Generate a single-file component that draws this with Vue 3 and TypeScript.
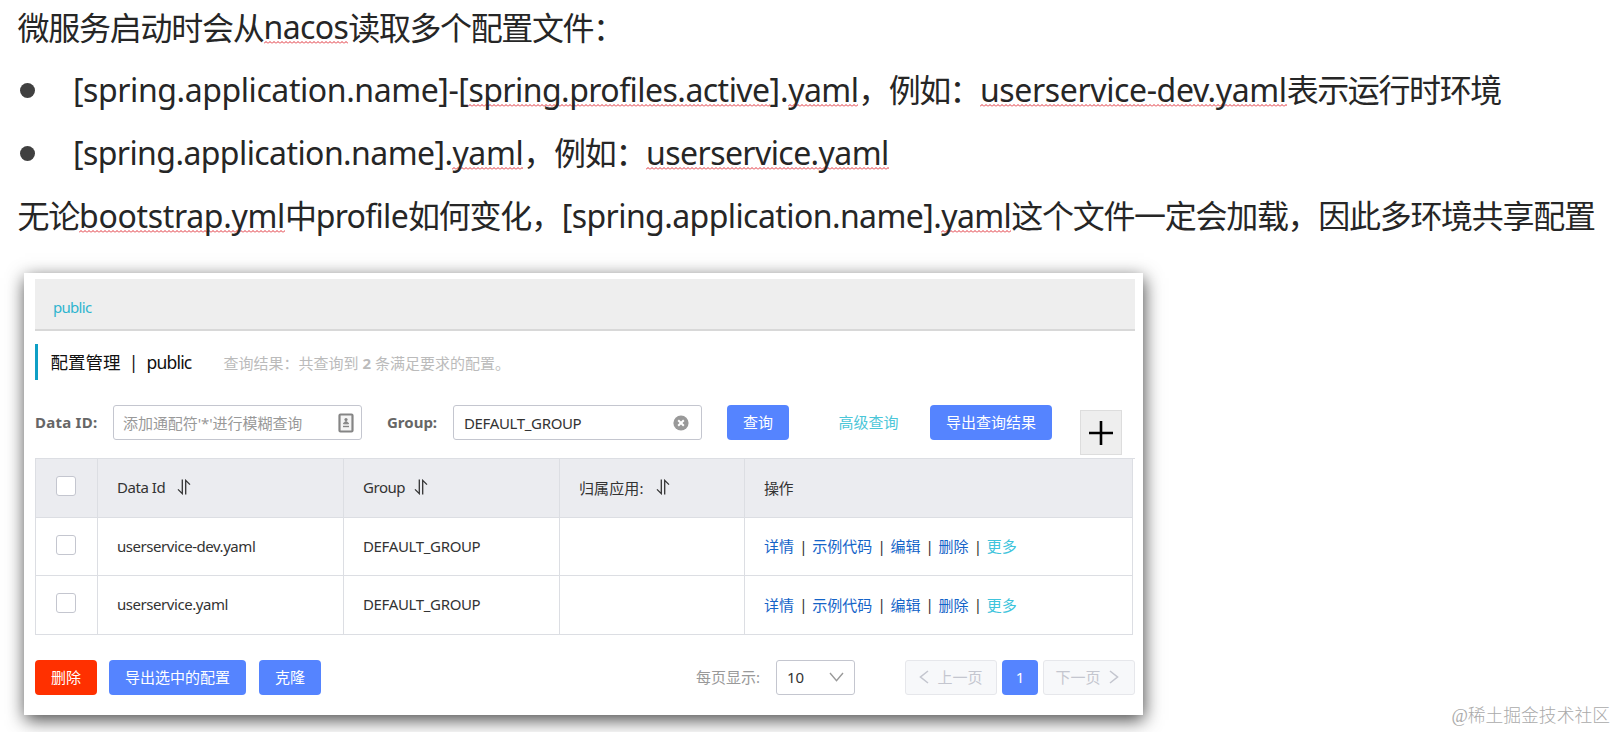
<script setup lang="ts">
interface Segment {
  text: string
  kind: 'cjk' | 'latin'
  track: number
  marked: boolean
}
interface Line {
  bullet: boolean
  segments: Segment[]
}

const cjk = (text: string, track = -1.25): Segment => ({ text, kind: 'cjk', track, marked: false })
const latin = (text: string, track: number): Segment => ({ text, kind: 'latin', track, marked: false })
const marked = (text: string, track: number): Segment => ({ text, kind: 'latin', track, marked: true })

const lines: Line[] = [
  { bullet: false, segments: [cjk('微服务启动时会从'), marked('nacos', -0.6), cjk('读取多个配置文件：', -1.4)] },
  {
    bullet: true,
    segments: [
      latin('[spring.application.name]-[', -0.42),
      marked('spring.profiles.active', -0.54),
      latin('].', -0.2),
      marked('yaml', -0.6),
      cjk('，例如：', -1.6),
      marked('userservice-dev.yaml', -0.38),
      cjk('表示运行时环境', -1.4),
    ],
  },
  {
    bullet: true,
    segments: [
      latin('[spring.application.name].', -0.58),
      marked('yaml', -0.4),
      cjk('，例如：', -1.3),
      marked('userservice.yaml', -0.58),
    ],
  },
  {
    bullet: false,
    segments: [
      cjk('无论'),
      marked('bootstrap.yml', -0.32),
      cjk('中'),
      latin('profile', -0.7),
      cjk('如何变化，'),
      latin('[spring.application.name].', -0.58),
      marked('yaml', -0.6),
      cjk('这个文件一定会加载，因此多环境共享配置', -1.3),
    ],
  },
]

const headers = [
  { label: 'Data Id', sortable: true },
  { label: 'Group', sortable: true },
  { label: '归属应用:', sortable: true },
  { label: '操作', sortable: false },
]
const rows = [
  { id: 'userservice-dev.yaml', group: 'DEFAULT_GROUP' },
  { id: 'userservice.yaml', group: 'DEFAULT_GROUP' },
]
const actions = ['详情', '示例代码', '编辑', '删除']
</script>

<template>
  <main class="page">
    <section class="notes">
      <p v-for="(line, i) in lines" :key="i" class="line">
        <span v-if="line.bullet" class="bullet"><i class="dot"></i></span>
        <span
          v-for="(s, j) in line.segments"
          :key="j"
          :class="[s.kind, { marked: s.marked }]"
          :style="{ letterSpacing: s.track + 'px' }"
        >{{ s.text }}</span>
      </p>
    </section>

    <section class="panel">
      <div class="namespace">public</div>
      <div class="title">
        <span class="title-name">配置管理</span>
        <span class="title-sep">|</span>
        <span class="title-space">public</span>
        <span class="result">查询结果：共查询到 <b>2</b> 条满足要求的配置。</span>
      </div>

      <div class="search">
        <label class="label label-id">Data ID:</label>
        <div class="input placeholder">
          <span>添加通配符'*'进行模糊查询</span>
          <svg width="16" height="20" viewBox="0 0 16 20">
            <rect x="1.5" y="1.5" width="13" height="17" rx="1" fill="#f4f4f4" stroke="#858585" stroke-width="2.2" />
            <circle cx="8" cy="6.500" r="1.6" fill="#858585" />
            <path d="M8 7v3.500M5.500 10.800c0-2.500 5-2.500 5 0z" fill="#858585" stroke="#858585" stroke-width="1" />
            <path d="M5 13.500h6" stroke="#858585" stroke-width="1.4" />
          </svg>
        </div>
        <label class="label label-group">Group:</label>
        <div class="input">
          <span>DEFAULT_GROUP</span>
          <svg width="16" height="16" viewBox="0 0 16 16">
            <circle cx="8" cy="8" r="7.600" fill="#999" />
            <path d="M5.200 5.200l5.600 5.600M10.800 5.200l-5.600 5.600" stroke="#fff" stroke-width="2" />
          </svg>
        </div>
        <button class="btn query">查询</button>
        <a class="advanced">高级查询</a>
        <button class="btn export">导出查询结果</button>
        <div class="plus">
          <svg width="26" height="26" viewBox="0 0 26 26"><path d="M13 1v24M1 13h24" stroke="#000" stroke-width="2.6" /></svg>
        </div>
      </div>

      <div class="table">
        <div class="row head">
          <div class="cell check"><i class="box"></i></div>
          <div v-for="h in headers" :key="h.label" class="cell">
            {{ h.label }}
            <svg v-if="h.sortable" class="sort" width="14" height="16" viewBox="0 0 14 16">
              <path d="M5.300 .5V14.600L1 10.400M8.700 15.500V1.400L13 5.600" fill="none" stroke="#333" stroke-width="1.3" />
            </svg>
          </div>
        </div>
        <div v-for="r in rows" :key="r.id" class="row">
          <div class="cell check"><i class="box"></i></div>
          <div class="cell">{{ r.id }}</div>
          <div class="cell group">{{ r.group }}</div>
          <div class="cell"></div>
          <div class="cell">
            <template v-for="a in actions" :key="a">
              <a class="action">{{ a }}</a><span class="sep">|</span>
            </template>
            <a class="more">更多</a>
          </div>
        </div>
      </div>

      <div class="footer">
        <button class="btn danger">删除</button>
        <button class="btn export-selected">导出选中的配置</button>
        <button class="btn clone">克隆</button>
        <span class="page-label">每页显示:</span>
        <div class="select">
          <span>10</span>
          <svg width="15" height="10" viewBox="0 0 15 10"><path d="M1 1l6.500 7.600L14 1" fill="none" stroke="#999" stroke-width="1.4" /></svg>
        </div>
        <div class="pager prev">
          <svg width="10" height="14" viewBox="0 0 10 14"><path d="M9 1L1.500 7L9 13" fill="none" stroke="#c4c6cf" stroke-width="1.6" /></svg>
          <span>上一页</span>
        </div>
        <div class="current">1</div>
        <div class="pager next">
          <span>下一页</span>
          <svg width="10" height="14" viewBox="0 0 10 14"><path d="M1 1L8.500 7L1 13" fill="none" stroke="#c4c6cf" stroke-width="1.6" /></svg>
        </div>
      </div>
    </section>

    <div class="watermark">@稀土掘金技术社区</div>
  </main>
</template>

<style>
body {
  margin: 0;
  background: #fff;
  overflow: hidden;
}
</style>

<style scoped>
.page {
  position: relative;
  box-sizing: border-box;
  width: 1617px;
  height: 732px;
  overflow: hidden;
  background: #fff;
  font-family: 'Noto Sans', 'Noto Sans CJK SC', sans-serif;
  font-size: 15px;
  color: #333;
}
.notes {
  height: 273px;
  padding-left: 17.500px;
  box-sizing: border-box;
  color: #262626;
}
.line {
  display: flex;
  align-items: center;
  height: 63px;
  margin: 0;
  line-height: 44px;
  white-space: pre;
}
.line:first-child {
  height: 54px;
  margin-bottom: 4px;
}
.bullet {
  width: 55.500px;
  flex: none;
}
.dot {
  display: block;
  width: 15px;
  height: 15px;
  margin: 2px 0 0 2.500px;
  border-radius: 50%;
  background: #404040;
}
.cjk {
  padding-bottom: 3px;
  font-family: 'Noto Sans CJK SC', sans-serif;
  font-size: 32px;
}
.latin {
  font-size: 32px;
}
.marked {
  background: url("data:image/svg+xml,%3Csvg xmlns='http://www.w3.org/2000/svg' width='4' height='3'%3E%3Cpath d='M0 2.500L2 .5L4 2.500' fill='none' stroke='%23e03038' stroke-width='1'/%3E%3C/svg%3E") 0 36px repeat-x;
}
.panel {
  box-sizing: border-box;
  width: 1119px;
  height: 442px;
  margin-left: 24px;
  padding: 6px 8px 0 11px;
  background: #fff;
  box-shadow: 1px 5px 17px rgba(0, 0, 0, 0.72);
}
.namespace {
  box-sizing: border-box;
  height: 52px;
  padding-left: 18px;
  border-bottom: 2px solid #d8d8d8;
  background: #eee;
  color: #2fb5cf;
  line-height: 57px;
  letter-spacing: -0.7px;
}
.title {
  display: flex;
  align-items: center;
  box-sizing: border-box;
  height: 36px;
  margin-top: 13px;
  padding-left: 12.500px;
  border-left: 3px solid #0e9fc5;
  color: #111;
  font-size: 17.500px;
}
.title-sep {
  width: 26px;
  text-align: center;
}
.title-space {
  width: 77px;
  letter-spacing: -0.8px;
}
.title-name {
  width: 70px;
  line-height: 34px;
}
.result {
  color: #bbb;
  font-size: 15px;
}
.search {
  display: flex;
  height: 53px;
  margin-top: 25px;
}
.label {
  color: #666;
  font-size: 15px;
  font-weight: 700;
  line-height: 35px;
  letter-spacing: 0.25px;
  white-space: nowrap;
}
.label-id {
  width: 78px;
}
.label-group {
  width: 66px;
  margin-left: 25px;
  letter-spacing: 0;
}
.input {
  display: flex;
  align-items: center;
  justify-content: space-between;
  box-sizing: border-box;
  width: 249px;
  height: 35px;
  padding: 0 12px 0 10px;
  border: 1px solid #c4c6cf;
  border-radius: 3px;
  letter-spacing: -0.35px;
}
.placeholder {
  padding: 0 7px 0 9px;
  color: #999;
  letter-spacing: -0.05px;
}
.btn {
  height: 35px;
  padding: 0 0 2px;
  border: 0;
  border-radius: 4px;
  background: #5584ff;
  color: #fff;
  font: inherit;
}
.query {
  width: 62px;
  margin-left: 25px;
}
.advanced {
  width: 60px;
  margin-left: 49.500px;
  color: #4bc6d8;
  line-height: 34px;
}
.export {
  width: 122px;
  margin-left: 31.500px;
}
.plus {
  display: flex;
  align-items: center;
  justify-content: center;
  box-sizing: border-box;
  width: 42px;
  height: 45px;
  margin: 5px 0 0 28px;
  border: 1px solid #ddd;
  background: #eee;
}
.table {
  border-top: 1px solid #dcdee3;
}
.row {
  display: grid;
  grid-template-columns: 62px 246px 216px 185px 388px;
  box-sizing: border-box;
  width: 1098px;
  height: 58.500px;
  border-left: 1px solid #dcdee3;
  border-bottom: 1px solid #dcdee3;
}
.cell {
  display: flex;
  align-items: center;
  padding: 0 0 1px 19px;
  border-right: 1px solid #dcdee3;
  letter-spacing: -0.45px;
  white-space: nowrap;
}
.cell.group {
  letter-spacing: -0.35px;
}
.head {
  background: #ebecf0;
}
.head .cell:nth-child(4) {
  letter-spacing: 0.1px;
}
.head .cell:nth-child(3) .sort {
  margin-left: 9px;
}
.check {
  align-items: flex-start;
  padding: 17px 0 0 20px;
}
.box {
  box-sizing: border-box;
  width: 20px;
  height: 20px;
  border: 1px solid #c4c6cf;
  border-radius: 3px;
  background: #fff;
}
.sort {
  margin-left: 12px;
}
.action {
  color: #1464c8;
  letter-spacing: 0;
}
.more {
  color: #40c4dc;
  letter-spacing: 0;
}
.sep {
  width: 18.200px;
  text-align: center;
}
.footer {
  display: flex;
  margin-top: 25px;
}
.danger {
  width: 62px;
  background: #ff3000;
}
.export-selected {
  width: 137px;
  margin-left: 12px;
}
.clone {
  width: 62px;
  margin-left: 13px;
}
.page-label {
  width: 80px;
  margin-left: 375px;
  color: #999;
  line-height: 34px;
}
.select {
  display: flex;
  align-items: center;
  justify-content: space-between;
  box-sizing: border-box;
  width: 79px;
  height: 35px;
  padding: 0 10px;
  border: 1px solid #c4c6cf;
  border-radius: 3px;
}
.pager {
  display: flex;
  align-items: center;
  justify-content: center;
  gap: 8px;
  box-sizing: border-box;
  width: 92px;
  height: 35px;
  padding-bottom: 1px;
  border: 1px solid #e6e7eb;
  border-radius: 3px;
  background: #f7f8fa;
  color: #c4c6cf;
}
.prev {
  margin-left: 50px;
}
.pager.next {
  padding-right: 4px;
}
.current {
  width: 36px;
  height: 35px;
  margin: 0 5px;
  border-radius: 4px;
  background: #5584ff;
  color: #fff;
  line-height: 35px;
  text-align: center;
}
.watermark {
  position: absolute;
  right: 7px;
  bottom: 3px;
  color: #aaa;
  font-family: 'Liberation Serif', 'Noto Sans CJK SC', serif;
  font-size: 17.800px;
  font-weight: 300;
  line-height: 26px;
}
</style>
